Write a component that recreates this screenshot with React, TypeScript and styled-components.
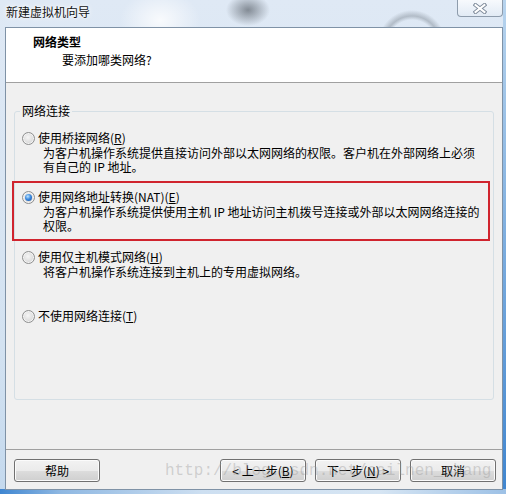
import React from "react";
import styled, { createGlobalStyle } from "styled-components";

const Global = createGlobalStyle`
  html, body {
    margin: 0;
    padding: 0;
  }
  body {
    width: 506px;
    height: 494px;
    overflow: hidden;
    font-family: "Noto Sans CJK SC", "Noto Sans", sans-serif;
    font-size: 12px;
    color: #000;
  }
`;

const Ventana = styled.div`
  width: 506px;
  height: 494px;
  box-sizing: border-box;
  display: flex;
  flex-direction: column;
  padding: 0 3px 4px 5px;
  background:
    linear-gradient(90deg, #3f86d1 0, #8fb8e2 12%, #cddff1 40%, #d6e5f3 75%, #9dc1e6 100%) bottom / 100% 5px no-repeat,
    linear-gradient(180deg, #b8d4ee, #3f85cf) right / 3px 100% no-repeat,
    radial-gradient(ellipse 22px 16px at 248px 10px, rgba(55, 62, 70, 0.55), transparent),
    radial-gradient(circle at 412px 44px, transparent 24px, rgba(95, 105, 115, 0.35) 28px, transparent 34px),
    radial-gradient(ellipse 40px 30px at 160px 20px, rgba(255, 255, 255, 0.8), transparent),
    linear-gradient(180deg, #dfe9f5 0%, #d3e2f1 70%, #c4d9ee 100%);
`;

const BarraTitulo = styled.div`
  height: 27px;
  flex-shrink: 0;
  display: flex;
  align-items: flex-start;
  justify-content: space-between;
`;

const Titulo = styled.div`
  margin: 5px 0 0 1px;
  line-height: 14px;
  color: #111;
  text-shadow: 0 0 6px #fff, 0 0 3px #fff;
`;

const BotonCerrar = styled.div`
  width: 46px;
  height: 17px;
  box-sizing: border-box;
  border: 1px solid #8e9cac;
  border-top: none;
  border-radius: 0 0 4px 4px;
  background: linear-gradient(180deg, rgba(255, 255, 255, 0.75), rgba(228, 236, 245, 0.6));
  display: flex;
  align-items: center;
  justify-content: center;
`;

const Cliente = styled.div`
  flex: 1;
  display: flex;
  flex-direction: column;
  border: 1px solid #7f92a6;
  background: #f0f0f0;
`;

const Encabezado = styled.div`
  height: 55px;
  box-sizing: border-box;
  flex-shrink: 0;
  background: #fff;
  border-bottom: 1px solid #a0a0a0;
  padding: 7px 0 0 27px;
`;

const TituloPaso = styled.div`
  font-weight: bold;
  line-height: 14px;
`;

const Subtitulo = styled.div`
  margin: 4px 0 0 29px;
  line-height: 14px;
`;

const Cuerpo = styled.div`
  flex: 1;
  padding: 21px 8px 0 8px;
`;

const Grupo = styled.fieldset`
  margin: 0;
  min-width: 0;
  height: 296px;
  box-sizing: border-box;
  border: 1px solid #d5dfe5;
  border-radius: 3px;
  padding: 13px 7px 0 7px;
`;

const Leyenda = styled.legend`
  padding: 0 2px;
  margin-left: -2px;
  line-height: 14px;
`;

const Opcion = styled.div<{ $marcado?: boolean; $arriba?: number }>`
  display: grid;
  grid-template-columns: 13px 1fr;
  column-gap: 3px;
  line-height: 14px;
  margin-top: ${(p) => p.$arriba ?? 0}px;
  ${(p) =>
    p.$marcado &&
    `
    border: 2px solid #d0242e;
    padding: 7px 8px 6px 8px;
    margin-left: -10px;
    margin-right: -4px;
  `}
`;

const Radio = styled.span<{ $activo?: boolean }>`
  width: 13px;
  height: 13px;
  box-sizing: border-box;
  align-self: start;
  margin-top: 1px;
  border-radius: 50%;
  border: 1px solid #8e8f8f;
  background: radial-gradient(circle at 45% 40%, #f6f6f6 0%, #dedede 55%, #c8c8c8 100%);
  box-shadow: inset 0 0 0 1px #f4f4f4;
  position: relative;

  ${(p) =>
    p.$activo &&
    `
    &::after {
      content: "";
      position: absolute;
      left: 2px;
      top: 2px;
      width: 7px;
      height: 7px;
      border-radius: 50%;
      background: radial-gradient(circle at 40% 35%, #bfe6ff 0%, #3d8be0 45%, #10499c 100%);
    }
  `}
`;

const Etiqueta = styled.div``;

const Descripcion = styled.div`
  grid-column: 2;
  margin: 1px 0 0 5px;
`;

const Pie = styled.div`
  height: 40px;
  box-sizing: border-box;
  flex-shrink: 0;
  border-top: 1px solid #a0a0a0;
  padding: 9px 6px 0 8px;
  display: flex;
  align-items: flex-start;
  gap: 9px;
  position: relative;
`;

const Boton = styled.button<{ $empuja?: boolean }>`
  width: 86px;
  height: 23px;
  margin-left: ${(p) => (p.$empuja ? "auto" : "0")};
  border: 1px solid #707070;
  border-radius: 3px;
  background: linear-gradient(180deg, #f2f2f2 0%, #ebebeb 50%, #dddddd 51%, #cfcfcf 100%);
  box-shadow: inset 0 0 0 1px #fbfbfb;
  font-family: "Noto Sans CJK SC", "Noto Sans", sans-serif;
  font-size: 12px;
  color: #000;
  padding: 0;
  line-height: 14px;
`;

const MarcaAgua = styled.div`
  position: absolute;
  left: 159px;
  top: 11px;
  font-family: "Liberation Mono", monospace;
  font-size: 16px;
  line-height: 20px;
  color: rgba(150, 150, 150, 0.38);
  pointer-events: none;
  white-space: nowrap;
`;

const IconoCerrar = () => (
  <svg width="14" height="11" viewBox="0 0 14 11">
    <g strokeLinecap="square">
      <line x1="2.5" y1="2" x2="11.5" y2="9" stroke="#7d8999" strokeWidth="4" />
      <line x1="11.5" y1="2" x2="2.5" y2="9" stroke="#7d8999" strokeWidth="4" />
      <line x1="2.5" y1="2" x2="11.5" y2="9" stroke="#fff" strokeWidth="2" />
      <line x1="11.5" y1="2" x2="2.5" y2="9" stroke="#fff" strokeWidth="2" />
    </g>
  </svg>
);

export default function App() {
  return (
    <>
      <Global />
      <Ventana>
        <BarraTitulo>
          <Titulo>新建虚拟机向导</Titulo>
          <BotonCerrar>
            <IconoCerrar />
          </BotonCerrar>
        </BarraTitulo>

        <Cliente>
          <Encabezado>
            <TituloPaso>网络类型</TituloPaso>
            <Subtitulo>要添加哪类网络?</Subtitulo>
          </Encabezado>

          <Cuerpo>
            <Grupo>
              <Leyenda>网络连接</Leyenda>

              <Opcion>
                <Radio />
                <Etiqueta>
                  使用桥接网络(<u>R</u>)
                </Etiqueta>
                <Descripcion>
                  <div>为客户机操作系统提供直接访问外部以太网网络的权限。客户机在外部网络上必须</div>
                  <div>有自己的 IP 地址。</div>
                </Descripcion>
              </Opcion>

              <Opcion $marcado $arriba={7}>
                <Radio $activo />
                <Etiqueta>
                  使用网络地址转换(NAT)(<u>E</u>)
                </Etiqueta>
                <Descripcion>
                  <div>为客户机操作系统提供使用主机 IP 地址访问主机拨号连接或外部以太网网络连接的</div>
                  <div>权限。</div>
                </Descripcion>
              </Opcion>

              <Opcion $arriba={9}>
                <Radio />
                <Etiqueta>
                  使用仅主机模式网络(<u>H</u>)
                </Etiqueta>
                <Descripcion>
                  <div>将客户机操作系统连接到主机上的专用虚拟网络。</div>
                </Descripcion>
              </Opcion>

              <Opcion $arriba={30}>
                <Radio />
                <Etiqueta>
                  不使用网络连接(<u>T</u>)
                </Etiqueta>
              </Opcion>
            </Grupo>
          </Cuerpo>

          <Pie>
            <Boton>帮助</Boton>
            <Boton $empuja>
              &lt; 上一步(<u>B</u>)
            </Boton>
            <Boton>
              下一步(<u>N</u>) &gt;
            </Boton>
            <Boton>取消</Boton>
            <MarcaAgua>http://blog.csdn.net/cailnen_shang</MarcaAgua>
          </Pie>
        </Cliente>
      </Ventana>
    </>
  );
}
